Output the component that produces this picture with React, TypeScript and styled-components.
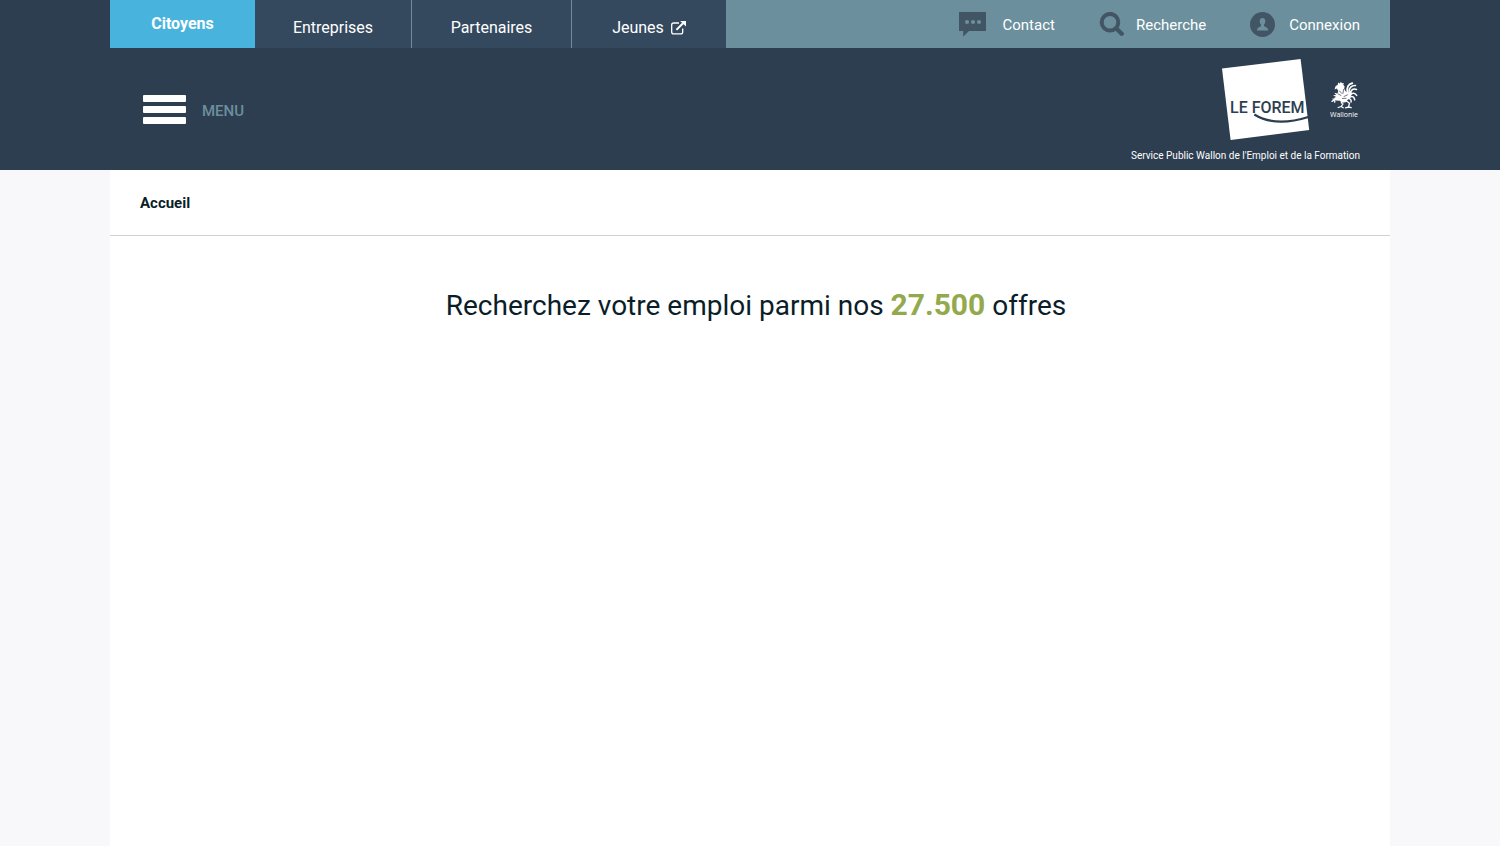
import React from "react";
import styled, { createGlobalStyle } from "styled-components";

const GlobalStyle = createGlobalStyle`
  *, *::before, *::after { box-sizing: border-box; }
  html, body { margin: 0; padding: 0; }
  body {
    background: #f8f8fb;
    color: #0a1e29;
    font-family: Roboto, "Liberation Sans", sans-serif;
    font-size: 16px;
  }
  a { color: inherit; text-decoration: none; }
`;

const Page = styled.div`
  min-height: 100vh;
  display: flex;
  flex-direction: column;
`;

const Header = styled.header`
  background: #2d3e50;
  color: #fff;
`;

const Container = styled.div`
  width: 100%;
  max-width: 1280px;
  margin: 0 auto;
`;

const TopBar = styled(Container)`
  display: flex;
  justify-content: space-between;
  height: 48px;
  background: #6b8f9d;
`;

const Tabs = styled.nav`
  display: flex;
`;

const Tab = styled.a<{ $active?: boolean; $width: number }>`
  display: flex;
  align-items: center;
  justify-content: center;
  gap: 7px;
  width: ${(p) => p.$width}px;
  padding-bottom: ${(p) => (p.$active ? 1 : 0)}px;
  padding-top: ${(p) => (p.$active ? 0 : 7)}px;
  background: ${(p) => (p.$active ? "#48b4de" : "#34495e")};
  font-size: 16px;
  font-weight: ${(p) => (p.$active ? 700 : 400)};
  &:not(:first-child):not(:last-child) {
    border-right: 1px solid #6b8f9d;
  }
`;

const Tools = styled.nav`
  display: flex;
  align-items: flex-start;
  gap: 44px;
  padding: 12px 30px 0;
`;

const Tool = styled.a<{ $gap: number }>`
  display: flex;
  align-items: flex-start;
  gap: ${(p) => p.$gap}px;
  font-size: 15px;
  line-height: 26px;
  svg { display: block; }
`;

const Brand = styled(Container)`
  display: flex;
  justify-content: space-between;
  align-items: flex-start;
  height: 122px;
  padding: 0 30px 0 33px;
`;

const MenuButton = styled.button`
  display: flex;
  align-items: flex-start;
  gap: 16px;
  margin-top: 47px;
  padding: 0;
  border: 0;
  background: none;
  color: #6b8f9d;
  font: 500 15px/32px Roboto, "Liberation Sans", sans-serif;
  cursor: pointer;
`;

const Bars = styled.span`
  display: flex;
  flex-direction: column;
  gap: 4px;
`;

const Bar = styled.span`
  width: 43px;
  height: 7px;
  border-radius: 1px;
  background: #fff;
`;

const Identity = styled.div`
  display: flex;
  flex-direction: column;
  align-items: flex-end;
  padding-top: 10px;
`;

const Logos = styled.div`
  display: flex;
  gap: 20px;
  svg { display: block; }
`;

const Tagline = styled.p`
  margin: 10px 0 0;
  font-size: 10px;
  line-height: 12px;
`;

const Content = styled(Container)`
  flex: 1;
  background: #fff;
`;

const Breadcrumb = styled.nav`
  padding: 23px 30px 22px;
  border-bottom: 1px solid #cdd3d7;
  font-size: 15px;
  font-weight: 700;
  line-height: 20px;
`;

const Headline = styled.h1`
  margin: 0;
  padding: 49px 0 0 12px;
  text-align: center;
  font-size: 28px;
  font-weight: 400;
  line-height: 40px;
`;

const Count = styled.strong`
  color: #93a94e;
  font-size: 30px;
  font-weight: 700;
`;

const ExternalIcon = () => (
  <svg width="15" height="14" viewBox="0 0 15 14" fill="none" aria-hidden="true">
    <path
      d="M8 2H2.6Q.7 2 .7 3.9v7Q.7 12.8 2.6 12.8h7.2q1.9 0 1.9-1.9V7.6"
      stroke="#fff"
      strokeWidth="1.3"
    />
    <path d="M5.4 8.9 12 2.3" stroke="#fff" strokeWidth="2" />
    <path d="M9.2 0H15v5.6z" fill="#fff" />
  </svg>
);

const ChatIcon = () => (
  <svg width="27" height="25" viewBox="0 0 27 25" aria-hidden="true">
    <path d="M0 0h27v19H10l-5.8 5.7V19H0z" fill="#425565" />
    <g fill="#6b8f9d">
      <circle cx="8" cy="10" r="2.1" />
      <circle cx="14" cy="10" r="2.1" />
      <circle cx="20" cy="10" r="2.1" />
    </g>
  </svg>
);

const SearchIcon = () => (
  <svg width="25" height="25" viewBox="0 0 25 25" fill="none" stroke="#425565" aria-hidden="true">
    <circle cx="11" cy="10.2" r="8.3" strokeWidth="4" />
    <path d="m17.200 16.300 5.500 5.400" strokeWidth="4.400" strokeLinecap="round" />
  </svg>
);

const UserIcon = () => (
  <svg width="25" height="25" viewBox="0 0 25 25" aria-hidden="true">
    <circle cx="12.5" cy="12.5" r="12.5" fill="#425565" />
    <path
      d="M12.5 6c2 0 3 1.500 2.800 3.600-.1 1.500-.7 2.600-1.300 3.100v1.400c.3 1 4.200.9 4.200 4.400H7c0-3.500 3.700-3.400 4-4.400v-1.400c-.6-.5-1.200-1.600-1.300-3.100C9.500 7.500 10.500 6 12.500 6z"
      fill="#6b8f9d"
    />
  </svg>
);

const ForemLogo = () => (
  <svg width="88" height="82" viewBox="0 0 88 82" role="img" aria-label="Le Forem">
    <path d="M0 10.500 78.600 1 87.200 72 8.600 82z" fill="#fff" />
    <text x="8" y="55" fontFamily="Roboto, sans-serif" fontSize="16" fontWeight="500" fill="#2d3e50">
      LE FOREM
    </text>
    <path d="M32.300 56.500c13 8 32 9.500 54 2.500" fill="none" stroke="#2d3e50" strokeWidth="2.200" />
  </svg>
);

const WallonieLogo = () => (
  <svg width="30" height="82" viewBox="0 0 30 82" role="img" aria-label="Wallonie">
    {/* head, comb, wing and body of the rooster */}
    <path
      d="M5.500 28.300l2.300-1.500.2-2.300 1.700.9 1.200-1.600 1 1.500 1.900-.4-.5 2 1.300 1.400-.4 2.700 1.800 2.700 3 .6 2.200-1.500.3 3.600-1.300 3.400-2.500 2-1.500 2.300-3.500.6-3-2-3.700-.3-2.200-2.500 2.300-1-3.200-1.600 3.200-.3-1.800-2.300 3 .8 1-2.300-1.400-2.600-2.300.8z"
      fill="#fff"
    />
    {/* tail plumes and legs */}
    <g fill="none" stroke="#fff" strokeLinecap="round">
      <path d="M17.500 33.500c-.8-4 .8-7.500 4.700-8.300" strokeWidth="2" />
      <path d="M19 34c.2-4.300 2.200-6.600 6.500-6.500M20.500 35c.6-3.400 2.800-4.800 6-3.500M20.500 36.800c2-2.400 4.300-2 6.200.6M20 39c2.500-1.200 4.300 0 4.700 2.800M18.500 40.500c2 .2 2.900 1.500 2.600 3.500" strokeWidth="1.500" />
      <path d="M8.500 39.500c-2 2.300-3.500 2.500-5.500 1.500M4.500 41.700l-2.500 1.700M5 41.500l-.3 2.700M16.500 43l3 2.200-1 3.800M18.500 49l-3 .8M18.500 49l2.700.6M12.500 42.500c-1.800 1.500-1.500 2.700.4 3.500l-1.700 2.500M11.200 48.500l-3 1M11.200 48.500l2 1.200" strokeWidth="1.300" />
      <path d="m9.500 33 2.300 2.500M8 35.800l3 1.700M13.500 31.500l-.5 3.800M14 38.500l3.500-1.700M12.500 40.500l3.500-.2" stroke="#2d3e50" strokeWidth=".7" />
    </g>
    <text x="14" y="59" textAnchor="middle" fontFamily="Open Sans, sans-serif" fontSize="7" fill="#fff">
      Wallonie
    </text>
  </svg>
);

export default function App() {
  return (
    <Page>
      <GlobalStyle />
      <Header>
        <TopBar>
          <Tabs aria-label="Profils">
            <Tab href="#" $active $width={145} aria-current="page">Citoyens</Tab>
            <Tab href="#" $width={157}>Entreprises</Tab>
            <Tab href="#" $width={160}>Partenaires</Tab>
            <Tab href="#" $width={154}>Jeunes <ExternalIcon /></Tab>
          </Tabs>
          <Tools aria-label="Outils">
            <Tool href="#" $gap={17}><ChatIcon />Contact</Tool>
            <Tool href="#" $gap={12}><SearchIcon />Recherche</Tool>
            <Tool href="#" $gap={14}><UserIcon />Connexion</Tool>
          </Tools>
        </TopBar>
        <Brand>
          <MenuButton type="button">
            <Bars aria-hidden="true"><Bar /><Bar /><Bar /></Bars>
            MENU
          </MenuButton>
          <Identity>
            <Logos>
              <ForemLogo />
              <WallonieLogo />
            </Logos>
            <Tagline>Service Public Wallon de l'Emploi et de la Formation</Tagline>
          </Identity>
        </Brand>
      </Header>
      <Content as="main">
        <Breadcrumb aria-label="Fil d'Ariane">
          <a href="#">Accueil</a>
        </Breadcrumb>
        <Headline>
          Recherchez votre emploi parmi nos <Count>27.500</Count> offres
        </Headline>
      </Content>
    </Page>
  );
}
